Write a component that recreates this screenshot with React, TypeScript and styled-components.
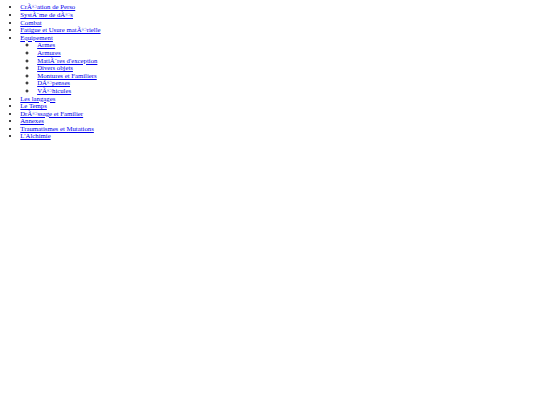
import React from "react"
import styled, { createGlobalStyle } from "styled-components"

// --- the reference is a 1280px page shrunk to 540px, so every size is scaled ---
const S = 540 / 1280
const px = (n: number) => `${(n * S).toFixed(3)}px`

const GlobalStyle = createGlobalStyle`
  html, body {
    margin: 0;
    padding: 0;
    background: #ffffff;
  }
`

const menu = [
  { label: "CrÃ©ation de Perso" },
  { label: "SystÃ¨me de dÃ©s" },
  { label: "Combat" },
  { label: "Fatigue et Usure matÃ©rielle" },
  {
    label: "Equipement",
    children: [
      "Armes",
      "Armures",
      "MatiÃ¨res d'exception",
      "Divers objets",
      "Montures et Familiers",
      "DÃ©penses",
      "VÃ©hicules",
    ],
  },
  { label: "Les langages" },
  { label: "Le Temps" },
  { label: "DrÃ©ssage et Familier" },
  { label: "Annexes" },
  { label: "Traumatismes et Mutations" },
  { label: "L'Alchimie" },
]

export default function App() {
  return (
    <>
      <GlobalStyle />
      <Page>
        <List>
          {menu.map(item => (
            <Item key={item.label}>
              <Link href="#">{item.label}</Link>
              {item.children && (
                <SubList>
                  {item.children.map(child => (
                    <Item key={child}>
                      <Link href="#">{child}</Link>
                    </Item>
                  ))}
                </SubList>
              )}
            </Item>
          ))}
        </List>
      </Page>
    </>
  )
}

// --- styled components ---
const Page = styled.div`
  padding: ${px(8)};
  font-family: "Liberation Serif", "Times New Roman", serif;
  font-size: ${px(16)};
  line-height: ${px(18)};
  color: #000000;
`

const List = styled.ul`
  margin: 0;
  padding-left: ${px(40)};
  list-style: disc;
`

const SubList = styled.ul`
  margin: 0;
  padding-left: ${px(40)};
  list-style: circle;
`

const Item = styled.li`
  line-height: inherit;
`

const Link = styled.a`
  color: #0000ee;
  text-decoration: underline;
`
